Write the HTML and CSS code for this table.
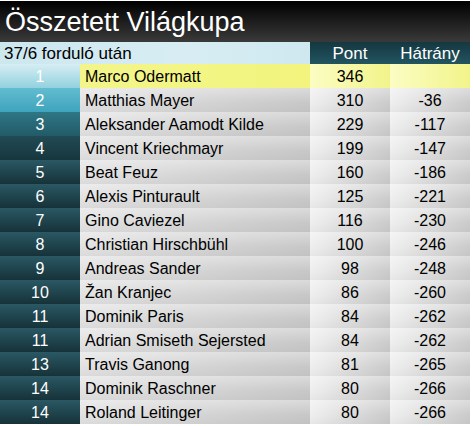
FILE: index.html
```html
<!DOCTYPE html>
<html lang="hu">
<head>
<meta charset="utf-8">
<link rel="stylesheet" href="styles.css">
</head>
<body>
<div class="widget">
  <div class="title">Összetett Világkupa</div>
  <div class="grid">
    <div class="hcell hsub">37/6 forduló után</div>
    <div class="hcell hdark">Pont</div>
    <div class="hcell hdark">Hátrány</div>

    <div class="rank r1">1</div><div class="name y">Marco Odermatt</div><div class="num y">346</div><div class="num y"></div>
    <div class="rank r2">2</div><div class="name">Matthias Mayer</div><div class="num">310</div><div class="num">-36</div>
    <div class="rank r3">3</div><div class="name">Aleksander Aamodt Kilde</div><div class="num">229</div><div class="num">-117</div>
    <div class="rank r4">4</div><div class="name">Vincent Kriechmayr</div><div class="num">199</div><div class="num">-147</div>
    <div class="rank">5</div><div class="name">Beat Feuz</div><div class="num">160</div><div class="num">-186</div>
    <div class="rank">6</div><div class="name">Alexis Pinturault</div><div class="num">125</div><div class="num">-221</div>
    <div class="rank">7</div><div class="name">Gino Caviezel</div><div class="num">116</div><div class="num">-230</div>
    <div class="rank">8</div><div class="name">Christian Hirschbühl</div><div class="num">100</div><div class="num">-246</div>
    <div class="rank">9</div><div class="name">Andreas Sander</div><div class="num">98</div><div class="num">-248</div>
    <div class="rank">10</div><div class="name">Žan Kranjec</div><div class="num">86</div><div class="num">-260</div>
    <div class="rank">11</div><div class="name">Dominik Paris</div><div class="num">84</div><div class="num">-262</div>
    <div class="rank">11</div><div class="name">Adrian Smiseth Sejersted</div><div class="num">84</div><div class="num">-262</div>
    <div class="rank">13</div><div class="name">Travis Ganong</div><div class="num">81</div><div class="num">-265</div>
    <div class="rank">14</div><div class="name">Dominik Raschner</div><div class="num">80</div><div class="num">-266</div>
    <div class="rank">14</div><div class="name">Roland Leitinger</div><div class="num">80</div><div class="num">-266</div>
  </div>
</div>
</body>
</html>
```

FILE: styles.css
```css
html, body {
  margin: 0;
  padding: 0;
  background: #ffffff;
}
body {
  font-family: "Liberation Sans", Arial, sans-serif;
}
.widget {
  width: 470px;
  margin-top: 1px;
}
.title {
  height: 41px;
  box-sizing: border-box;
  padding-left: 5px;
  padding-top: 6px;
  font-size: 27px;
  line-height: 30px;
  color: #ffffff;
  background: linear-gradient(to bottom, #000000, #3a3a3a);
  white-space: nowrap;
}
.grid {
  display: grid;
  grid-template-columns: 80px 230px 80px 80px;
  grid-template-rows: 22px;
  grid-auto-rows: 24px;
}
.hcell {
  height: 22px;
  line-height: 23px;
  font-size: 17px;
  white-space: nowrap;
}
.hsub {
  grid-column: 1 / span 2;
  padding-left: 4px;
  color: #000;
  background: linear-gradient(to right, #cde7ef, #d7edf3 60%, #cfe8f0);
}
.hdark {
  text-align: center;
  color: #ffffff;
  background: linear-gradient(to bottom, #153740, #225560);
}
.rank,
.name,
.num {
  line-height: 25px;
  font-size: 16px;
}
.rank {
  text-align: center;
  color: #ffffff;
  background: linear-gradient(to bottom, #2a5864, #163239);
}
.rank.r1 { background: linear-gradient(to bottom, #d6eef4, #92d1de); }
.rank.r2 { background: linear-gradient(to bottom, #62bcd0, #3ea4bd); }
.rank.r3 { background: linear-gradient(to bottom, #2f7685, #225b68); }
.rank.r4 { background: linear-gradient(to bottom, #224a54, #17363e); }
.name {
  padding-left: 5px;
  color: #000;
  white-space: nowrap;
  background:
    linear-gradient(to bottom, rgba(255,255,255,0.35), rgba(255,255,255,0) 60%, rgba(0,0,0,0.03)),
    linear-gradient(to right, #e2e2e2, #c8c8c8);
}
.num {
  text-align: center;
  color: #000;
  background:
    linear-gradient(to bottom, rgba(255,255,255,0.35), rgba(255,255,255,0) 60%, rgba(0,0,0,0.03)),
    linear-gradient(to right, #efefef, #cbcbcb);
}
.name.y {
  background: linear-gradient(to right, #f3f58a, #f2f47e);
}
.num.y {
  background: linear-gradient(to right, #fbfdc4, #f2f48a);
}
```
